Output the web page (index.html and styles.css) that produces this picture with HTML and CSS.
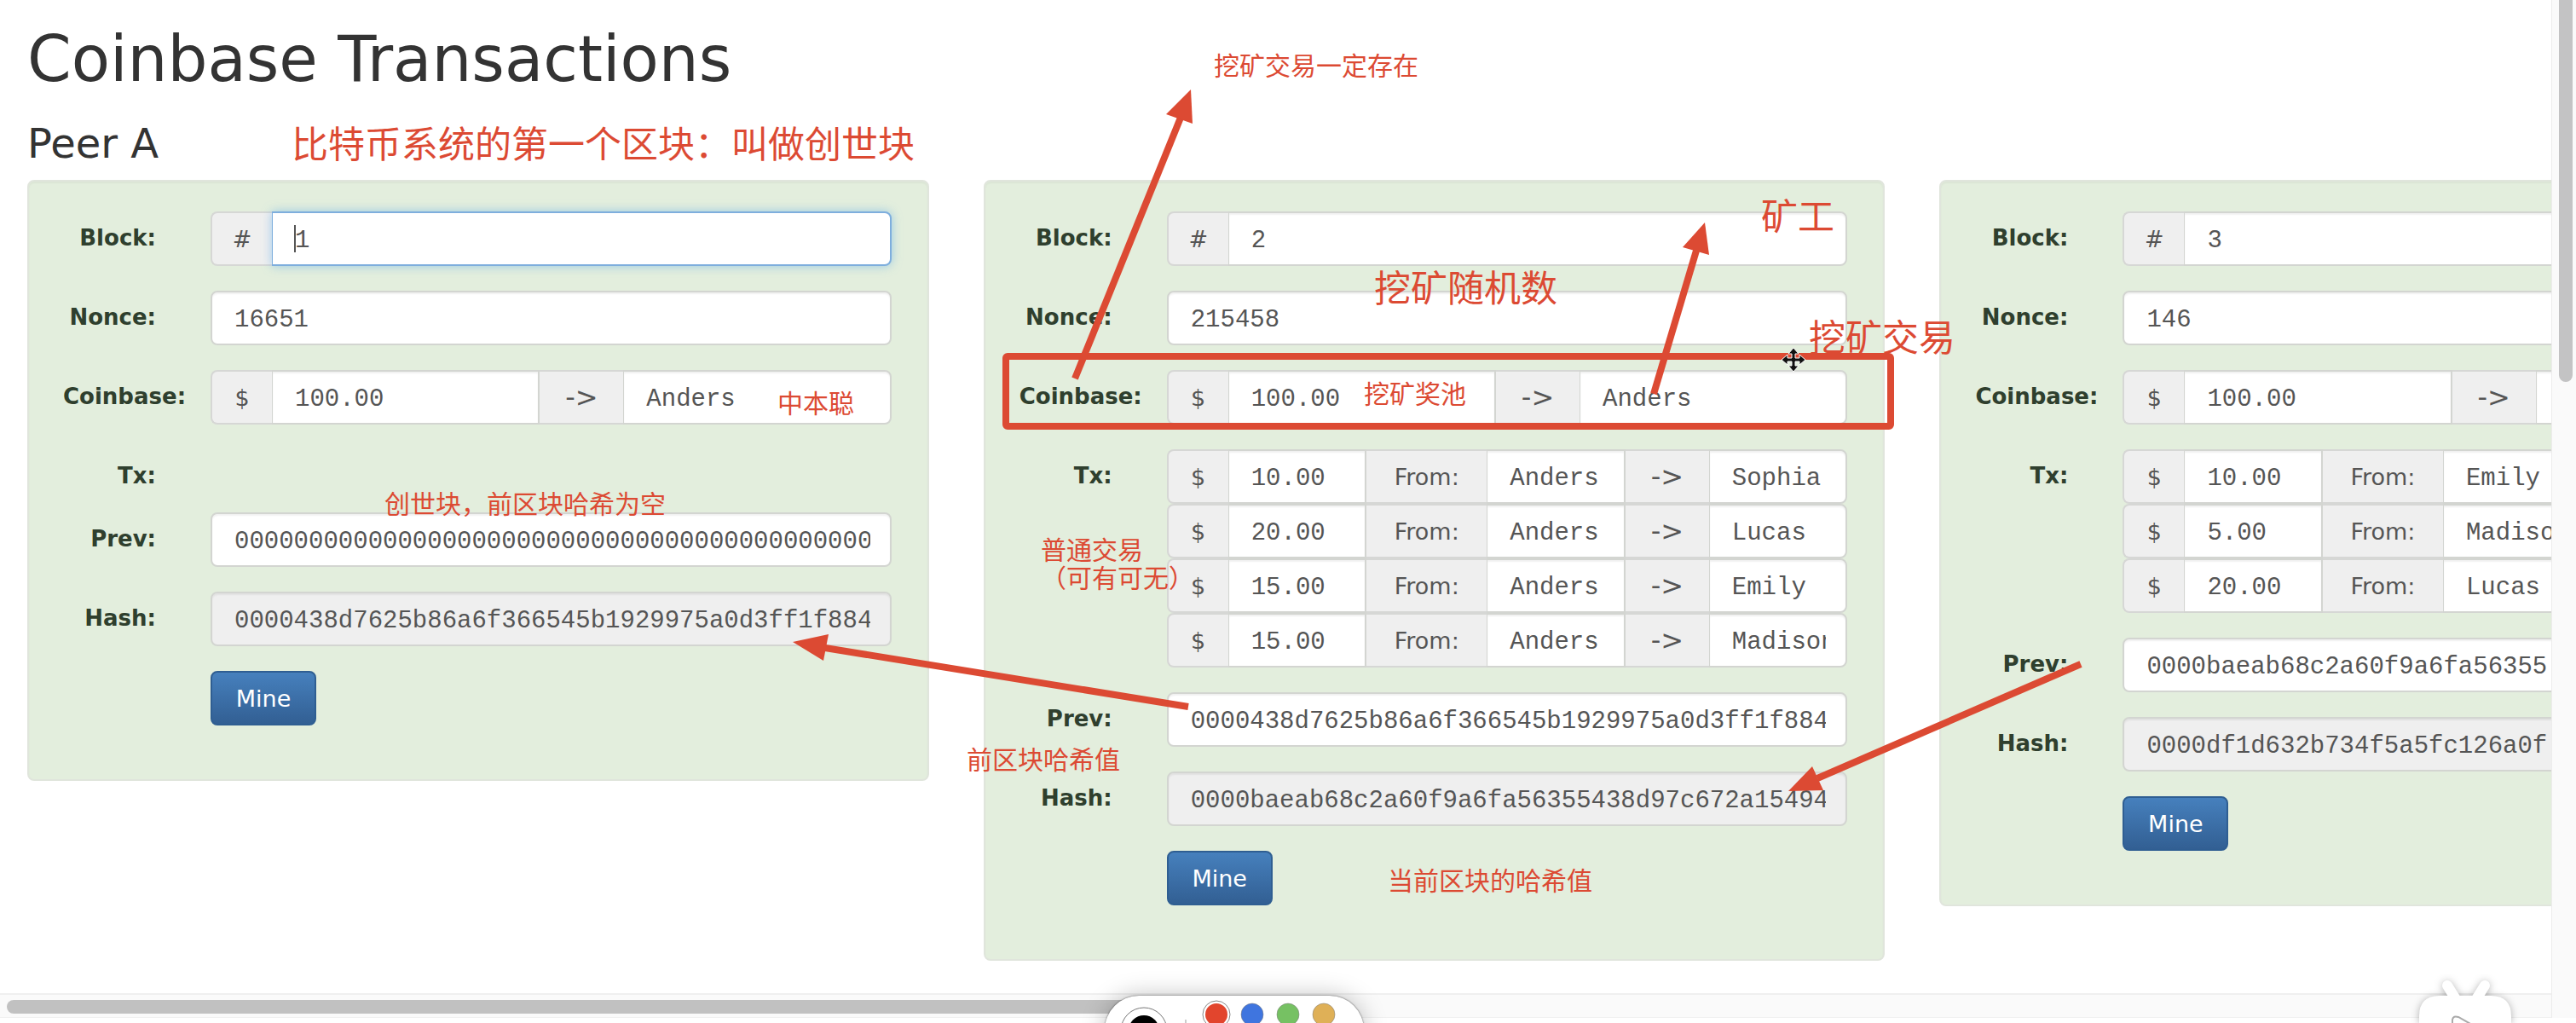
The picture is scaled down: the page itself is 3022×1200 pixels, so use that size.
FILE: index.html
```html
<!DOCTYPE html>
<html lang="zh-CN">
<head>
<meta charset="utf-8">
<title>Coinbase Transactions</title>
<link rel="stylesheet" href="styles.css">
</head>
<body>
<div class="window">
  <main class="page">
    <h1 class="title">Coinbase Transactions</h1>
    <h2 class="peer">Peer A</h2>
    <div class="chain">
      <form class="block">
        <label class="label" for="a1-block">Block:</label>
        <div class="group"><span class="addon">#</span><input class="field is-focused" id="a1-block" value="1"></div>
        <label class="label" for="a1-nonce">Nonce:</label>
        <div class="group"><input class="field" id="a1-nonce" value="16651"></div>
        <label class="label" for="a1-coin">Coinbase:</label>
        <div class="group"><span class="addon">$</span><input class="field" id="a1-coin" value="100.00"><span class="addon arrow">-&gt;</span><input class="field" aria-label="Coinbase to" value="Anders"></div>
        <span class="label">Tx:</span>
        <div class="txs"></div>
        <label class="label" for="a1-prev">Prev:</label>
        <div class="group"><input class="field" id="a1-prev" value="00000000000000000000000000000000000000000000"></div>
        <label class="label" for="a1-hash">Hash:</label>
        <div class="group"><input class="field" id="a1-hash" readonly value="0000438d7625b86a6f366545b1929975a0d3ff1f884"></div>
        <button class="mine" type="button">Mine</button>
      </form>

      <form class="block">
        <label class="label" for="a2-block">Block:</label>
        <div class="group"><span class="addon">#</span><input class="field" id="a2-block" value="2"></div>
        <label class="label" for="a2-nonce">Nonce:</label>
        <div class="group"><input class="field" id="a2-nonce" value="215458"></div>
        <label class="label" for="a2-coin">Coinbase:</label>
        <div class="group"><span class="addon">$</span><input class="field" id="a2-coin" value="100.00"><span class="addon arrow">-&gt;</span><input class="field" aria-label="Coinbase to" value="Anders"></div>
        <label class="label" for="a2-tx">Tx:</label>
        <div class="txs">
          <div class="group"><span class="addon">$</span><input class="field" id="a2-tx" value="10.00"><span class="addon from">From:</span><input class="field" aria-label="From" value="Anders"><span class="addon arrow">-&gt;</span><input class="field" aria-label="To" value="Sophia"></div>
          <div class="group"><span class="addon">$</span><input class="field" aria-label="Amount" value="20.00"><span class="addon from">From:</span><input class="field" aria-label="From" value="Anders"><span class="addon arrow">-&gt;</span><input class="field" aria-label="To" value="Lucas"></div>
          <div class="group"><span class="addon">$</span><input class="field" aria-label="Amount" value="15.00"><span class="addon from">From:</span><input class="field" aria-label="From" value="Anders"><span class="addon arrow">-&gt;</span><input class="field" aria-label="To" value="Emily"></div>
          <div class="group"><span class="addon">$</span><input class="field" aria-label="Amount" value="15.00"><span class="addon from">From:</span><input class="field" aria-label="From" value="Anders"><span class="addon arrow">-&gt;</span><input class="field" aria-label="To" value="Madison"></div>
        </div>
        <label class="label" for="a2-prev">Prev:</label>
        <div class="group"><input class="field" id="a2-prev" value="0000438d7625b86a6f366545b1929975a0d3ff1f884"></div>
        <label class="label" for="a2-hash">Hash:</label>
        <div class="group"><input class="field" id="a2-hash" readonly value="0000baeab68c2a60f9a6fa56355438d97c672a15494"></div>
        <button class="mine" type="button">Mine</button>
      </form>

      <form class="block">
        <label class="label" for="a3-block">Block:</label>
        <div class="group"><span class="addon">#</span><input class="field" id="a3-block" value="3"></div>
        <label class="label" for="a3-nonce">Nonce:</label>
        <div class="group"><input class="field" id="a3-nonce" value="146"></div>
        <label class="label" for="a3-coin">Coinbase:</label>
        <div class="group"><span class="addon">$</span><input class="field" id="a3-coin" value="100.00"><span class="addon arrow">-&gt;</span><input class="field" aria-label="Coinbase to"></div>
        <label class="label" for="a3-tx">Tx:</label>
        <div class="txs">
          <div class="group"><span class="addon">$</span><input class="field" id="a3-tx" value="10.00"><span class="addon from">From:</span><input class="field" aria-label="From" value="Emily"><span class="addon arrow"></span><input class="field" aria-label="To"></div>
          <div class="group"><span class="addon">$</span><input class="field" aria-label="Amount" value="5.00"><span class="addon from">From:</span><input class="field" aria-label="From" value="Madison"><span class="addon arrow"></span><input class="field" aria-label="To"></div>
          <div class="group"><span class="addon">$</span><input class="field" aria-label="Amount" value="20.00"><span class="addon from">From:</span><input class="field" aria-label="From" value="Lucas"><span class="addon arrow"></span><input class="field" aria-label="To"></div>
        </div>
        <label class="label" for="a3-prev">Prev:</label>
        <div class="group"><input class="field" id="a3-prev" value="0000baeab68c2a60f9a6fa56355"></div>
        <label class="label" for="a3-hash">Hash:</label>
        <div class="group"><input class="field" id="a3-hash" readonly value="0000df1d632b734f5a5fc126a0f"></div>
        <button class="mine" type="button">Mine</button>
      </form>
    </div>
  </main>
  <div class="vscroll"><div class="vthumb"></div></div>
  <div class="hscroll"><div class="hthumb"></div></div>
</div>

<svg class="notes" aria-label="批注">
  <g class="ink">
    <rect x="1180" y="418" width="1038" height="82" rx="2"/>
    <path d="M1261 444 L1385 138"/>
    <path d="M1940 462 L1990 294"/>
    <path d="M1394 829 L968 760"/>
    <path d="M2441 779 L2132 913"/>
  </g>
  <g class="heads">
    <path d="M1397 105 L1368 134 L1399 145 Z"/>
    <path d="M2000 261 L1974 290 L2005 299 Z"/>
    <path d="M930 753 L972 744 L966 775 Z"/>
    <path d="M2098 928 L2126 899 L2139 927 Z"/>
  </g>
  <g class="big">
    <text x="342" y="185">比特币系统的第一个区块：叫做创世块</text>
    <text x="1612" y="354">挖矿随机数</text>
    <text x="2066" y="270">矿工</text>
    <text x="2122" y="412">挖矿交易</text>
  </g>
  <g class="small">
    <text x="912" y="484">中本聪</text>
    <text x="451" y="602">创世块，前区块哈希为空</text>
    <text x="1424" y="88">挖矿交易一定存在</text>
    <text x="1600" y="473">挖矿奖池</text>
    <text x="1221" y="656">普通交易</text>
    <text x="1221" y="689">（可有可无）</text>
    <text x="1134" y="902">前区块哈希值</text>
    <text x="1628" y="1044">当前区块的哈希值</text>
  </g>
  <path class="cursor" d="M2104 408 l6 7 h-4 v5 h5 v-4 l7 6 l-7 6 v-4 h-5 v5 h4 l-6 7 l-6 -7 h4 v-5 h-5 v4 l-7 -6 l7 -6 v4 h5 v-5 h-4 z"/>
</svg>

<div class="palette">
  <svg width="304" height="64" viewBox="0 0 304 64">
    <circle cx="46" cy="41" r="27" fill="#fff" stroke="#777" stroke-width="1"/>
    <circle cx="46" cy="41" r="18" fill="#000"/>
    <path d="M95 28 V50" stroke="#999"/>
    <circle cx="131" cy="22" r="16" fill="#fff" stroke="#888"/>
    <circle cx="131" cy="22" r="13" fill="#e2452d"/>
    <circle cx="173" cy="22" r="13" fill="#3f75df" stroke="#777" stroke-opacity=".5"/>
    <circle cx="215" cy="22" r="13" fill="#76c163" stroke="#777" stroke-opacity=".5"/>
    <circle cx="257" cy="22" r="13" fill="#dfb057" stroke="#777" stroke-opacity=".5"/>
  </svg>
</div>

<svg class="player" width="148" height="70" viewBox="0 0 148 70">
  <g class="player-shape">
    <path d="M51 26 L61 42 M95 26 L85 42" stroke="#fff" stroke-width="12" stroke-linecap="round"/>
    <path d="M18 70 V62 Q18 38 42 38 H102 Q126 38 126 62 V70 Z" fill="#fff"/>
  </g>
  <path d="M57 72 V66 Q58 61 64 63 L80 72" fill="none" stroke="#aaa" stroke-width="2"/>
</svg>
</body>
</html>
```
FILE: styles.css
```css
* { box-sizing: border-box; }

body {
  margin: 0;
  height: 100vh;
  overflow: hidden;
  position: relative;
  background: #fff;
  color: #333;
  font-family: "DejaVu Sans", "Noto Sans CJK SC", sans-serif;
  font-size: 27px;
}

.window {
  display: grid;
  grid-template-columns: minmax(0, 1fr) 29px;
  grid-template-rows: minmax(0, 1fr) 29px;
  height: 100%;
  padding-bottom: 6px;
}

.page {
  overflow: hidden;
  padding: 20px 0 0 32px;
}

.title {
  margin: 0;
  font-size: 74px;
  line-height: 98px;
  font-weight: 400;
}

.peer {
  margin: 18px 0 11px;
  font-size: 48px;
  line-height: 64px;
  font-weight: 400;
}

.chain {
  display: flex;
  align-items: flex-start;
  gap: 64px;
}

.block {
  flex: 0 0 35vw;
  display: grid;
  grid-template-columns: 109px minmax(0, 1fr);
  column-gap: 64px;
  row-gap: 29px;
  padding: 35px 42px 63px 40px;
  border: 2px solid #e0e5dc;
  border-radius: 8px;
  background: #e3eedd;
  box-shadow: inset 0 2px 2px rgba(0, 0, 0, .04);
}

.label {
  padding-top: 13px;
  font-size: 26px;
  font-weight: 700;
  line-height: 37px;
  height: 45px;
  text-align: right;
  color: #2f3f2e;
  white-space: nowrap;
}

.label[for$="coin"] { text-align: left; }

.txs { min-height: 45px; }

.group {
  display: flex;
  height: 64px;
}

.field {
  flex: 1 1 0;
  min-width: 0;
  height: 64px;
  margin: 0;
  padding: 5px 23px 0 26px;
  border: 2px solid #d3d5d1;
  border-radius: 0;
  background: #fff;
  box-shadow: inset 0 2px 2px rgba(0, 0, 0, .06);
  color: #555;
  font-family: "Liberation Mono", monospace;
  font-size: 29px;
  outline: 0;
}

.field:read-only { background: #efefef; }

.field.is-focused {
  border-color: #7eaedd;
  background: linear-gradient(#555, #555) 25px center / 2px 32px no-repeat #fff;
  box-shadow: 0 0 12px rgba(102, 175, 233, .6);
}

.addon {
  flex: 0 0 72px;
  display: flex;
  align-items: center;
  justify-content: center;
  border: 2px solid #d6d7d5;
  border-right: 0;
  background: #efefef;
  color: #555;
}

.addon + .field { border-left-width: 1px; }
.field + .addon { border-left: 0; }
.arrow { flex-basis: 98px; font-size: 32px; }
.from { flex-basis: 141px; }

.group > :first-child {
  border-top-left-radius: 8px;
  border-bottom-left-radius: 8px;
}

.group > :last-child {
  border-top-right-radius: 8px;
  border-bottom-right-radius: 8px;
}

.mine {
  grid-column: 2;
  justify-self: start;
  width: 124px;
  height: 64px;
  padding: 0;
  border: 2px solid #2f5e92;
  border-radius: 8px;
  background: linear-gradient(#4680bd, #325f93);
  color: #fff;
  font-family: inherit;
  font-size: 27px;
}

.vscroll {
  grid-row: 1 / 3;
  grid-column: 2;
  padding: 0 4px 0 8px;
  border-left: 1px solid #ececec;
  background: #fafafa;
}

.vthumb {
  height: 448px;
  border-radius: 0 0 8px 8px;
  background: #c3c3c4;
}

.hscroll {
  grid-row: 2;
  grid-column: 1;
  padding: 6px 8px;
  border-top: 2px solid #efefef;
  border-bottom: 1px solid #f0f0f0;
  background: #fafafa;
}

.hthumb {
  width: 48%;
  height: 16px;
  border-radius: 8px;
  background: #c1c1c1;
}

.notes {
  position: absolute;
  inset: 0;
  width: 100%;
  height: 100%;
  pointer-events: none;
  font-family: "Noto Sans CJK SC", sans-serif;
}

.ink { fill: none; stroke: #dc4a33; stroke-width: 8px; }
.heads, .big, .small { fill: #dc4a33; }
.big { font-size: 43px; }
.small { font-size: 30px; }
.cursor { fill: #111; stroke: #fff; stroke-width: 1px; }

.palette {
  position: absolute;
  left: 1296px;
  bottom: -32px;
  width: 304px;
  height: 64px;
  border-radius: 40px 40px 0 0;
  background: #fff;
  box-shadow: 0 0 2px rgba(0, 0, 0, .7), 0 0 28px rgba(0, 0, 0, .25);
}

.player {
  position: absolute;
  right: 54px;
  bottom: 0;
}

.player-shape { filter: drop-shadow(0 1px 5px rgba(0, 0, 0, .3)); }
```
